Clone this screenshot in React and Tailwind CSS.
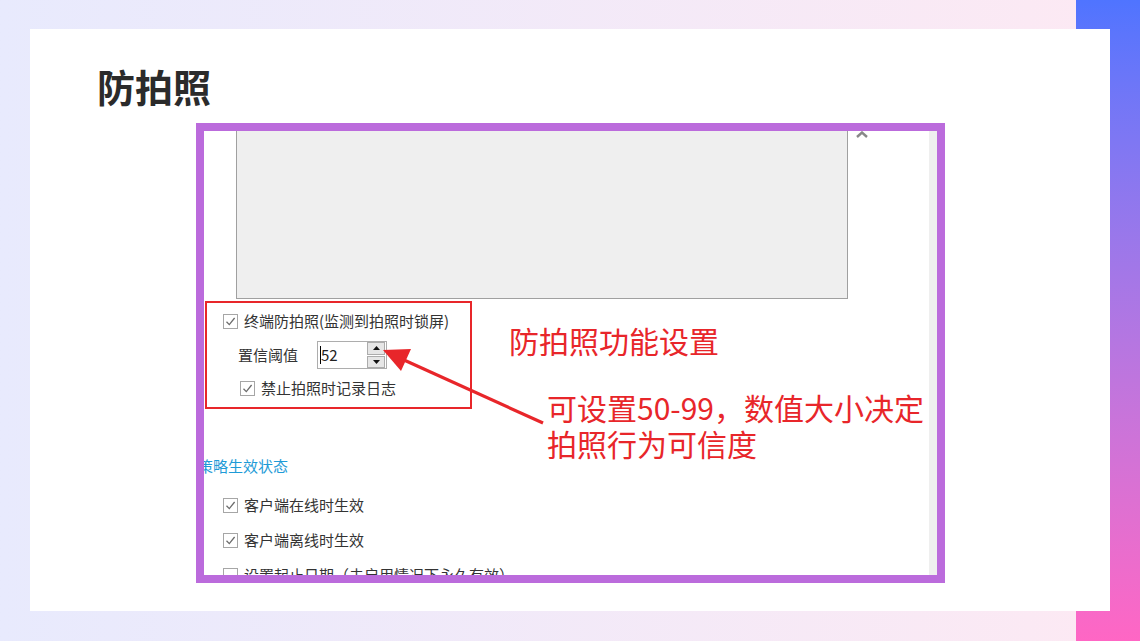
import React from 'react'

const font = { fontFamily: '"Noto Sans CJK SC", "Microsoft YaHei", sans-serif' }

const Check = ({ checked = true }) => (
  <span className="flex h-[15px] w-[15px] shrink-0 items-center justify-center border border-[#a6a6a6] bg-white">
    {checked && (
      <svg width="11" height="11" viewBox="0 0 11 11">
        <path d="M1.5 5.8 L4.3 8.6 L9.6 2" fill="none" stroke="#6b6b6b" strokeWidth="1.3" />
      </svg>
    )}
  </span>
)

const CheckRow = ({ label, checked, className = '' }) => (
  <div className={`flex h-[18px] items-center gap-[6px] ${className}`}>
    <Check checked={checked} />
    <span className="whitespace-nowrap text-[15px] leading-[18px] text-[#333]">{label}</span>
  </div>
)

const Spinner = () => (
  <div className="flex h-[28px] w-[70px] items-center border border-[#adadad] bg-white pl-[2px] pr-[1px]">
    <span className="h-[18px] w-px bg-black" />
    <span className="flex-1 text-[15px] leading-[18px] text-[#222]">52</span>
    <div className="flex h-[26px] w-[18px] flex-col gap-px">
      <span className="flex flex-1 items-center justify-center border border-[#acacac] bg-[#e6e6e6]">
        <svg width="7" height="4" viewBox="0 0 7 4"><path d="M0 4 L3.5 0 L7 4Z" fill="#111" /></svg>
      </span>
      <span className="flex flex-1 items-center justify-center border border-[#acacac] bg-[#e6e6e6]">
        <svg width="7" height="4" viewBox="0 0 7 4"><path d="M0 0 L3.5 4 L7 0Z" fill="#111" /></svg>
      </span>
    </div>
  </div>
)

const Shot = () => (
  <div className="relative ml-[166px] mt-[18px] h-[460px] w-[749px] border-[8px] border-[#bb6bdc] bg-white">
    <div className="flex h-full w-full overflow-hidden">
      <div className="flex-1">
        <div className="ml-[32px] h-[168px] w-[612px] border-x border-b border-[#a0a0a0] bg-[#efefef]" />

        <div className="ml-[1px] mt-[2px] h-[108px] w-[267px] border-2 border-[#e8262a] pl-[16px]">
          <CheckRow className="mt-[9px]" label="终端防拍照(监测到拍照时锁屏)" checked />
          <div className="ml-[15px] mt-[11px] flex h-[28px] items-center gap-[19px]">
            <span className="text-[15px] leading-[18px] text-[#333]">置信阈值</span>
            <Spinner />
          </div>
          <CheckRow className="ml-[17px] mt-[10px]" label="禁止拍照时记录日志" checked />
        </div>

        <div className="-ml-[6px] mt-[47px] h-[20px] whitespace-nowrap text-[15px] leading-[20px] text-[#1e9bd7]">
          策略生效状态
        </div>
        <div className="ml-[19px]">
          <CheckRow className="mt-[20px]" label="客户端在线时生效" checked />
          <CheckRow className="mt-[17px]" label="客户端离线时生效" checked />
          <CheckRow className="mt-[17px]" label="设置起止日期（未启用情况下永久有效）" checked={false} />
        </div>
      </div>
      <div className="w-[8px] shrink-0 bg-[#efefef]" />
    </div>

    {/* close glyph, cut at the top */}
    <svg className="absolute left-[651px] top-0" width="14" height="7" viewBox="0 0 14 7">
      <path d="M2 6 L7 1.5 L12 6" fill="none" stroke="#888" strokeWidth="2.4" />
    </svg>

    {/* annotation */}
    <svg className="absolute left-0 top-0" width="733" height="444" viewBox="0 0 733 444">
      <line x1="339" y1="292" x2="200" y2="229" stroke="#e8262a" strokeWidth="3.2" />
      <polygon points="179,219 197,240 207,218" fill="#e8262a" />
    </svg>
    <div className="absolute left-[305px] top-[191px] whitespace-nowrap text-[30px] leading-[36px] text-[#e8262a]">
      防拍照功能设置
    </div>
    <div className="absolute left-[343px] top-[258px] whitespace-nowrap text-[30px] leading-[36px] text-[#e8262a]">
      <div>可设置50-99，数值大小决定</div>
      <div>拍照行为可信度</div>
    </div>
  </div>
)

export default function App() {
  return (
    <div className="relative h-[641px] w-full overflow-hidden bg-linear-to-r from-[#e8eafd] to-[#fde9f3]" style={font}>
      <div className="absolute right-0 top-0 h-full w-[64px] bg-linear-to-b from-[#4f74ff] to-[#ff66c4]" />
      <div className="relative ml-[30px] mt-[29px] h-[582px] w-[1080px] bg-white pt-[38px]">
        <h1 className="ml-[67px] h-[38px] text-[38px] font-bold leading-[38px] text-[#2b2b2b]">防拍照</h1>
        <Shot />
      </div>
    </div>
  )
}
